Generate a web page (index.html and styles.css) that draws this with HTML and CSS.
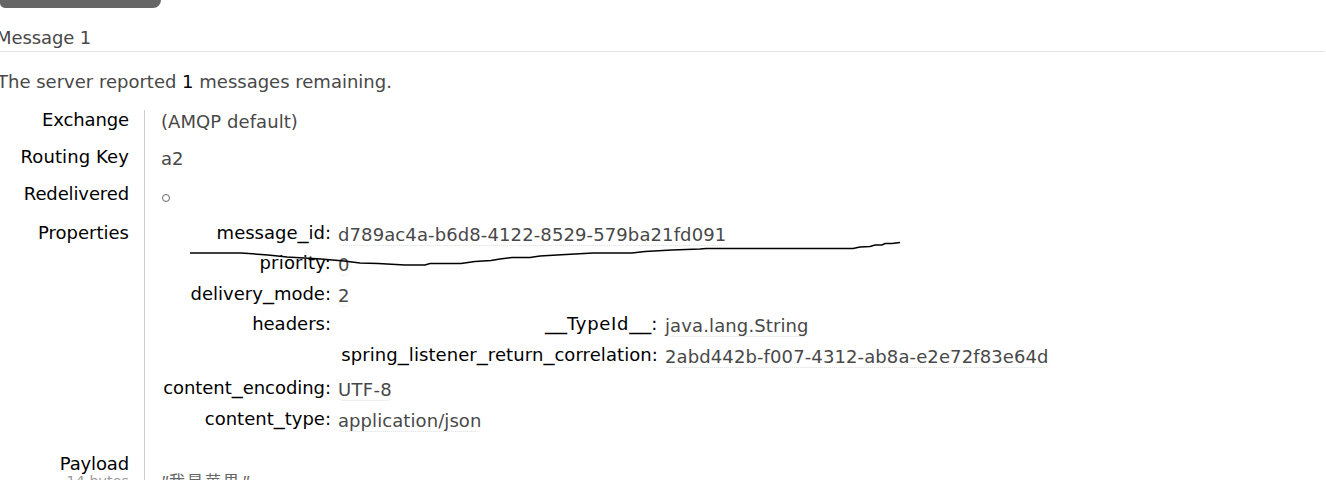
FILE: index.html
```html
<!DOCTYPE html>
<html lang="en">
<head>
<meta charset="utf-8">
<title>Get messages</title>
<link rel="stylesheet" href="styles.css">
</head>
<body>
<main class="page">
  <div class="button"></div>
  <h3 class="title"><span class="msg">Message 1</span></h3>
  <p class="summary">The server reported <b>1</b> messages remaining.</p>
  <div class="facts">
    <div class="row"><div class="label exchange">Exchange</div><div class="value amqp">(AMQP default)</div></div>
    <div class="row"><div class="label routing">Routing Key</div><div class="value">a2</div></div>
    <div class="row redelivered"><div class="label redel">Redelivered</div><div class="value"><span class="circle"></span></div></div>
    <div class="row properties"><div class="label">Properties</div>
      <div class="mini">
        <div class="prop"><span class="key">message<i>_</i>id:</span><span class="val uuid">d789ac4a-b6d8-4122-8529-579ba21fd091</span></div>
        <div class="prop"><span class="key prio">priority:</span><span class="val">0</span></div>
        <div class="prop"><span class="key">delivery<i>_</i>mode:</span><span class="val">2</span></div>
        <div class="prop headers"><span class="key">headers:</span>
          <div class="nested">
            <div class="prop"><span class="key typeid"><i>__</i>TypeId<i>__</i>:</span><span class="val java">java.lang.String</span></div>
            <div class="prop"><span class="key spring">spring<i>_</i>listener<i>_</i>return<i>_</i>correlation:</span><span class="val uuid">2abd442b-f007-4312-ab8a-e2e72f83e64d</span></div>
          </div>
        </div>
        <div class="prop"><span class="key enc">content<i>_</i>encoding:</span><span class="val utf">UTF-8</span></div>
        <div class="prop"><span class="key">content<i>_</i>type:</span><span class="val json">application/json</span></div>
      </div>
    </div>
    <div class="row payload"><div class="label"><span class="pay">Payload</span><small>14 bytes</small></div><pre class="body"><q>"</q>我是苹果<q>"</q></pre></div>
  </div>
  <svg class="stroke" width="720" height="40" viewBox="190 235 720 40"><path d="M190 253H241L268 255L287 257L321 259L344 261L360 263L378 263.500L405 265H425L430 263.500H461L475 261.500L491 260.500L500 259L512 257.500H530L540 256L557 255L593 253H632L645 251.500L672 250L700 249L706 248.500H853L860 247L870 246.500L875 245H882L885 243.500H892L900 242.500"/></svg>
</main>
</body>
</html>
```
FILE: styles.css
```css
* { box-sizing: border-box; }
body {
  margin: 0;
  background: #fff;
  color: #484848;
  font: 18px/22px Verdana, "DejaVu Sans", sans-serif;
  overflow: hidden;
}
.page { position: relative; height: 480px; overflow: hidden; }
.button { width: 161px; height: 8px; background: #666; border-radius: 0 0 8px 5px; }
.title {
  margin: 19px 1px 0 0;
  height: 25px;
  border-bottom: 1px solid #e4e4e4;
  font-size: 18px;
  font-weight: normal;
}
.msg { margin-left: -4px; letter-spacing: -.1px; }
.summary { margin: 19px 0 0 -3px; height: 22px; white-space: pre; }
.summary b { color: #000; font-weight: normal; }
.facts { margin-top: 17px; }
.row { display: grid; grid-template-columns: 145px 1fr; height: 37px; }
.redelivered { height: 39px; }
.properties { height: 231px; }
.payload { height: 40px; }
.label { padding-right: 15px; border-right: 1px solid #ccc; color: #000; text-align: right; white-space: nowrap; }
.exchange, .redel { letter-spacing: -.12px; }
.routing { letter-spacing: .1px; }
.amqp { letter-spacing: .07px; }
.row:first-child { height: 36px; margin-top: 1px; }
.row:first-child .label, .row:first-child .value { line-height: 20px; }
.value { padding: 2px 0 0 16px; white-space: nowrap; }
.circle { display: block; width: 8px; height: 8px; margin-top: 9px; margin-left: 1px; border: 1px solid #666; border-radius: 50%; }
.mini { padding-left: 15px; }
.prop { display: grid; grid-template-columns: 171px 1fr; column-gap: 7px; height: 31px; }
.mini > .prop:first-child { height: 30px; }
.mini > .prop:nth-child(3) { height: 30px; }
.mini > .headers { height: 64px; }
.key { color: #000; text-align: right; white-space: nowrap; }
.key i { font-size: 22px; font-style: normal; line-height: 0; letter-spacing: 0; vertical-align: 1px; }
.prio { letter-spacing: .2px; }
.typeid { letter-spacing: .7px; }
.spring { letter-spacing: .08px; }
.enc { letter-spacing: -.05px; }
.val { justify-self: start; height: 22px; margin-top: 2px; border-bottom: 1px dotted #ddd; border-radius: 5px; white-space: nowrap; }
.uuid { letter-spacing: .11px; }
.java { letter-spacing: .12px; }
.utf { letter-spacing: .3px; }
.json { letter-spacing: .08px; }
.nested .prop { grid-template-columns: 320px 1fr; }
.pay { display: block; height: 18px; letter-spacing: -.15px; }
.label small { display: block; color: #999; font-size: 14px; line-height: 20px; letter-spacing: .2px; }
.body { margin: 16px 0 0 15px; font: 16px/22px "Noto Sans CJK SC", sans-serif; letter-spacing: 2px; color: #666; }
.body q { display: inline-block; width: 9px; font: italic 15px "Liberation Mono", monospace; letter-spacing: 0; }
.body q::before, .body q::after { content: none; }
.stroke { position: absolute; left: 190px; top: 235px; fill: none; stroke: #000; stroke-width: 1.500; }
```
